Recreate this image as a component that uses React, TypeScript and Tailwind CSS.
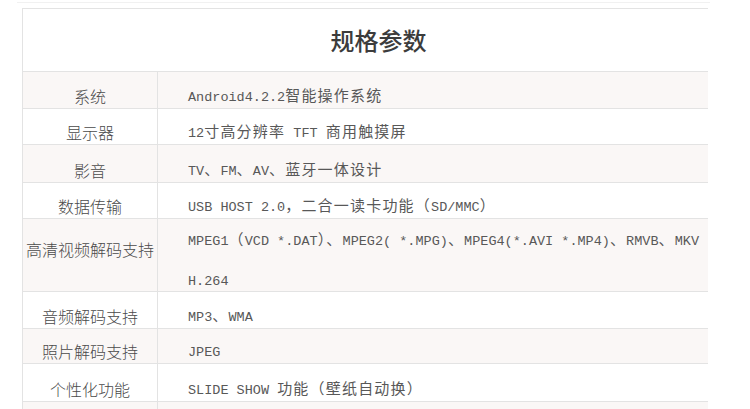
import React from 'react';

/* ── Data ─────────────────────────────────────────── */

interface SpecRow {
  label: string;
  lines: string[];
  h: string;
  shaded: boolean;
}

const rows: SpecRow[] = [
  { label: '系统', lines: ['Android4.2.2智能操作系统'], h: 'h-[37px]', shaded: true },
  { label: '显示器', lines: ['12寸高分辨率 TFT 商用触摸屏'], h: 'h-[36px]', shaded: false },
  { label: '影音', lines: ['TV、FM、AV、蓝牙一体设计'], h: 'h-[38px]', shaded: true },
  { label: '数据传输', lines: ['USB HOST 2.0，二合一读卡功能（SD/MMC）'], h: 'h-[36px]', shaded: false },
  {
    label: '高清视频解码支持',
    lines: ['MPEG1（VCD *.DAT）、MPEG2( *.MPG)、MPEG4(*.AVI *.MP4)、RMVB、MKV', 'H.264'],
    h: 'h-[73px]',
    shaded: true,
  },
  { label: '音频解码支持', lines: ['MP3、WMA'], h: 'h-[37px]', shaded: false },
  { label: '照片解码支持', lines: ['JPEG'], h: 'h-[35px]', shaded: true },
  { label: '个性化功能', lines: ['SLIDE SHOW 功能（壁纸自动换）'], h: 'h-[38px]', shaded: false },
  { label: '', lines: [''], h: 'h-[37px]', shaded: true },
];

/* ── Mixed latin / CJK text ──────────────────────── */

function Mixed({ text }: { text: string }) {
  const parts = text.match(/[\x20-\x7e]+|[^\x20-\x7e]+/g) ?? [];
  return (
    <>
      {parts.map((p, i) =>
        /^[\x20-\x7e]/.test(p) ? (
          <span key={i} className="font-['Liberation_Mono',monospace] text-[13.5px]">{p}</span>
        ) : (
          <span key={i} className="font-['Noto_Sans_CJK_SC',sans-serif] text-[15px] tracking-[1.2px]">{p}</span>
        ),
      )}
    </>
  );
}

/* ── Component ────────────────────────────────────── */

export default function App() {
  return (
    <div className="min-h-screen bg-white font-['Noto_Sans_CJK_SC',sans-serif]">
      <div className="pt-[2px] pl-[17px]">
        <div className="h-px w-[693px] bg-[#f1f1f1]" />
      </div>

      <div className="ml-[22px] mt-[5px] w-[686px] border-l border-t border-[#e3e3e3]">
        <div className="flex h-[63px] items-center justify-center border-b border-[#e3e3e3] pl-[26px]">
          <h2 className="text-[24px] font-medium leading-none text-[#3c3c3c]">规格参数</h2>
        </div>

        {rows.map((row, idx) => {
          const multi = row.lines.length > 1;
          return (
            <div
              key={idx}
              className={`flex ${row.h} border-b border-[#e3e3e3] ${row.shaded ? 'bg-[#faf7f6]' : 'bg-white'}`}
            >
              <div
                className={`flex w-[135px] shrink-0 justify-center border-r border-[#e3e3e3] text-[16px] font-light leading-[18px] text-[#4a4a4a] ${
                  multi ? 'items-center pb-[13px]' : 'items-end pb-[3px]'
                }`}
              >
                {row.label}
              </div>
              <div
                className={`flex flex-1 flex-col justify-end overflow-hidden whitespace-nowrap pl-[30px] leading-[18px] text-[#585858] ${
                  multi ? 'gap-[18px] pb-0' : 'pb-[1px]'
                }`}
              >
                {row.lines.map((line, i) => (
                  <div key={i}>
                    <Mixed text={line} />
                  </div>
                ))}
              </div>
            </div>
          );
        })}
      </div>
    </div>
  );
}
